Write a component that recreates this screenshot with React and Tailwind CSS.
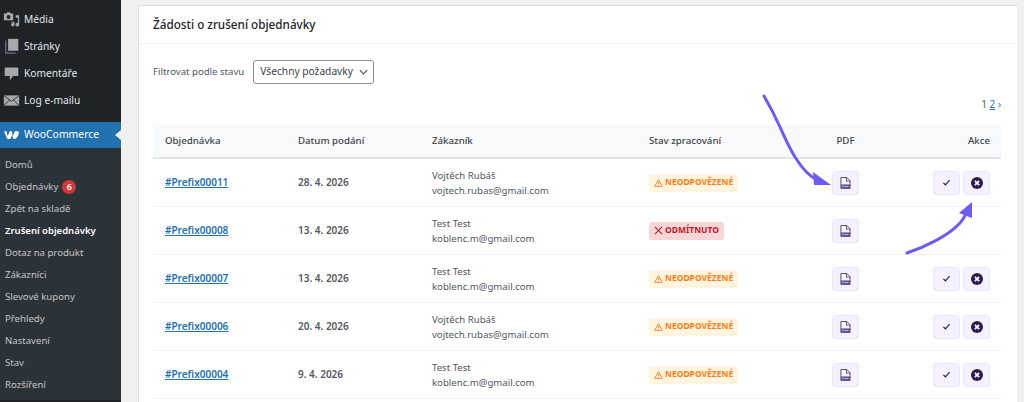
import React from "react";

const MediaIcon = () => (
  <svg viewBox="0 0 20 20" className="h-[17px] w-[17px] fill-[#a7aaad]">
    <path d="M1 3h3l1-1.500h3L9 3h3v8H1z M15 5h4v11a2.200 2.200 0 1 1-1.500-2V8H15z M9.500 12.500h4V16a2 2 0 1 1-1.500-1.800v-.7H9.500z" />
    <circle cx="6.500" cy="7" r="2.300" fill="#1d2327" />
  </svg>
);

const PagesIcon = () => (
  <svg viewBox="0 0 20 20" className="h-[17px] w-[17px] fill-[#a7aaad]">
    <path d="M6 1h12v14H6z" />
    <path d="M4 3v14h11v1.500H2.500V3z" fill="#6d6a9a" />
  </svg>
);

const CommentIcon = () => (
  <svg viewBox="0 0 20 20" className="h-[17px] w-[17px] fill-[#a7aaad]">
    <path d="M3 3h14a1 1 0 0 1 1 1v8a1 1 0 0 1-1 1h-5l-4 5v-5H3a1 1 0 0 1-1-1V4a1 1 0 0 1 1-1z" />
  </svg>
);

const MailIcon = () => (
  <svg viewBox="0 0 20 20" className="h-[17px] w-[17px]">
    <rect x="1" y="4" width="18" height="12" fill="#a7aaad" />
    <path d="M1.500 4.500 10 11l8.500-6.500M1.500 15.500 7.500 9.500M18.500 15.500l-6-6" fill="none" stroke="#1d2327" strokeWidth="1" />
  </svg>
);

const WooIcon = () => (
  <svg viewBox="0 0 20 12" className="h-[10px] w-[17px]">
    <path d="M1 1.500h3l1.300 6 2.700-6h2.500l1 6 2.500-6H18c1 0 1.300 3-.5 6-1.200 2-2.700 3.300-4 3.300-1.200 0-1.800-.8-2-2l-.5-2.500-2 3.500c-.6 1-1.300 1-2.500 1H5z" fill="#fff" />
  </svg>
);

const PdfIcon = () => (
  <svg viewBox="0 0 12 13" className="h-[12px] w-[11px]">
    <path d="M1 .500h6.500L11 4v8.500H1z" fill="#fff" stroke="#4a3a7c" strokeWidth="1" />
    <path d="M7 .500V4.500h4" fill="none" stroke="#4a3a7c" strokeWidth="1" />
    <path d="M1 8h10v4.500H1z" fill="#6a5a96" />
    <path d="M2.500 10.300h7" stroke="#d8b8cc" strokeWidth="1.200" strokeDasharray="1.500 .8" />
  </svg>
);

const CheckIcon = () => (
  <svg viewBox="0 0 12 10" className="h-[7px] w-[9px]">
    <path d="M1.500 5.500 4.500 8.300 10.500 1.500" fill="none" stroke="#33235f" strokeWidth="1.800" />
  </svg>
);

const CancelIcon = () => (
  <svg viewBox="0 0 14 14" className="h-[12px] w-[12px]">
    <circle cx="7" cy="7" r="7" fill="#2b1d52" />
    <path d="M4.500 4.500l5 5M9.500 4.500l-5 5" stroke="#fff" strokeWidth="2" />
  </svg>
);

const WarnIcon = () => (
  <svg viewBox="0 0 12 11" className="h-[8px] w-[9px] shrink-0">
    <path d="M6 1 11.200 10H.8z" fill="none" stroke="#f97f1c" strokeWidth="1.300" />
    <path d="M6 4v3.200M6 8v1" stroke="#f97f1c" strokeWidth="1.100" />
  </svg>
);

const CrossIcon = () => (
  <svg viewBox="0 0 10 10" className="h-[9px] w-[9px] shrink-0">
    <path d="M1 1l8 8M9 1 1 9" stroke="#b91c2c" strokeWidth="1.200" />
  </svg>
);

const topItems = [
  ["Média", MediaIcon],
  ["Stránky", PagesIcon],
  ["Komentáře", CommentIcon],
  ["Log e-mailu", MailIcon],
];

const subItems = [
  "Domů",
  "Objednávky",
  "Zpět na skladě",
  "Zrušení objednávky",
  "Dotaz na produkt",
  "Zákazníci",
  "Slevové kupony",
  "Přehledy",
  "Nastavení",
  "Stav",
  "Rozšíření",
];

const rows = [
  { id: "#Prefix00011", date: "28. 4. 2026", name: "Vojtěch Rubáš", mail: "vojtech.rubas@gmail.com", status: "open" },
  { id: "#Prefix00008", date: "13. 4. 2026", name: "Test Test", mail: "koblenc.m@gmail.com", status: "rejected" },
  { id: "#Prefix00007", date: "13. 4. 2026", name: "Test Test", mail: "koblenc.m@gmail.com", status: "open" },
  { id: "#Prefix00006", date: "20. 4. 2026", name: "Vojtěch Rubáš", mail: "vojtech.rubas@gmail.com", status: "open" },
  { id: "#Prefix00004", date: "9. 4. 2026", name: "Test Test", mail: "koblenc.m@gmail.com", status: "open" },
];

const IconButton = ({ children }) => (
  <button className="flex h-[24px] w-[27px] items-center justify-center rounded-[3px] border border-[#ebe6fb] bg-[#f5f2fe]">
    {children}
  </button>
);

const Sidebar = () => (
  <aside className="flex h-[402px] w-[121px] shrink-0 flex-col overflow-hidden bg-[#1d2327] pt-[6px] text-[9.600px]">
    <div className="mb-2 text-[10.200px]">
      {topItems.map(([label, Icon]) => (
        <div key={label} className="flex h-[27px] items-center gap-[4px] pl-[3px] text-[#e4e6e7]">
          <Icon />
          <span>{label}</span>
        </div>
      ))}
    </div>
    <div className="relative flex h-[26px] items-center gap-[4px] bg-[#2271b1] pl-[3px] text-[10.400px] text-[#fff]">
      <WooIcon />
      <span>WooCommerce</span>
      <div className="absolute right-0 top-[8px] h-0 w-0 border-y-[5px] border-r-[6px] border-y-transparent border-r-[#f0f0f1]" />
    </div>
    <div className="h-[252px] bg-[#2c3338] pt-[6px]">
      {subItems.map((label) => (
        <div
          key={label}
          className={
            label === "Zrušení objednávky"
              ? "flex h-[22px] items-center pl-[5px] text-[9.500px] font-semibold text-white"
              : "flex h-[22px] items-center pl-[5px] text-[#c3c4c7]"
          }
        >
          {label}
          {label === "Objednávky" && (
            <span className="ml-[4px] flex h-[14px] w-[14px] items-center justify-center rounded-full bg-[#d63638] text-[9px] font-semibold text-white">
              6
            </span>
          )}
        </div>
      ))}
    </div>
  </aside>
);

const Row = ({ row }) => (
  <div className="flex h-[48px] items-center border-b border-[#f0f0f1] pl-[12px] text-[9.600px] text-[#50575e]">
    <a className="w-[133px] text-[10px] font-semibold text-[#2271b1] underline">{row.id}</a>
    <div className="w-[134px] text-[10px] font-semibold text-[#50575e]">{row.date}</div>
    <div className="w-[217px] leading-[15px]">
      <div>{row.name}</div>
      <div>{row.mail}</div>
    </div>
    <div className="w-[183px]">
      {row.status === "open" ? (
        <span className="inline-flex h-[18px] items-center gap-[2px] rounded-[3px] bg-[#fff4de] px-[5px] text-[8.500px] font-bold text-[#f97f1c]">
          <WarnIcon />
          NEODPOVĚZENÉ
        </span>
      ) : (
        <span className="inline-flex h-[18px] items-center gap-[2px] rounded-[3px] bg-[#f8d5d7] px-[5px] text-[8.500px] font-bold text-[#b91c2c]">
          <CrossIcon />
          ODMÍTNUTO
        </span>
      )}
    </div>
    <IconButton>
      <PdfIcon />
    </IconButton>
    {row.status === "open" && (
      <div className="ml-auto mr-[11px] flex gap-[3px]">
        <IconButton>
          <CheckIcon />
        </IconButton>
        <IconButton>
          <CancelIcon />
        </IconButton>
      </div>
    )}
  </div>
);

export default function App() {
  return (
    <div className="relative flex h-[402px] w-[1024px] overflow-hidden bg-[#f0f0f1] font-['Noto_Sans',sans-serif]">
      <Sidebar />
      <main className="ml-[17px] mr-[7px] mt-[5px] flex-1 border-l border-t border-[#dcdcde] bg-white">
        <h2 className="flex h-[38px] items-center border-b border-[#f0f0f1] pl-[14px] text-[11.700px] font-medium text-[#1d2327]">
          Žádosti o zrušení objednávky
        </h2>
        <div className="ml-[14px] mr-[16px]">
          <div className="mt-[16px] flex items-center gap-[9px] text-[9.600px] text-[#50575e]">
            <span>Filtrovat podle stavu</span>
            <div className="flex h-[24px] w-[121px] items-center justify-between rounded-[3px] border border-[#8c8f94] pl-[6px] pr-[5px] text-[10.200px] whitespace-nowrap text-[#3c434a]">
              Všechny požadavky
              <svg viewBox="0 0 10 6" className="h-[6px] w-[9px]">
                <path d="M1 1l4 4 4-4" fill="none" stroke="#50575e" strokeWidth="1.300" />
              </svg>
            </div>
          </div>
          <div className="mt-[13px] h-[14px] text-right text-[10px] leading-[14px] text-[#50575e]">
            1 <span className="text-[#2271b1] underline">2</span> <span className="text-[#2271b1]">›</span>
          </div>
          <div>
            <div className="mt-[14px] flex h-[34px] items-center border-b-2 border-[#e4e5e7] bg-[#f8f9fa] pl-[12px] text-[9.700px] font-medium text-[#3c434a]">
              <div className="w-[133px]">Objednávka</div>
              <div className="w-[134px]">Datum podání</div>
              <div className="w-[217px]">Zákazník</div>
              <div className="w-[183px]">Stav zpracování</div>
              <div className="w-[27px] text-center">PDF</div>
              <div className="ml-auto mr-[11px]">Akce</div>
            </div>
            {rows.map((row) => (
              <Row key={row.id} row={row} />
            ))}
          </div>
        </div>
      </main>
      <svg className="pointer-events-none absolute left-0 top-0 h-[402px] w-[1024px]" viewBox="0 0 1024 402">
        <path d="M764 96C771 108 776 118 780 127C786 140 790 150 797 160C802 168 808 175 817 180" fill="none" stroke="#6c5cf0" strokeWidth="3" strokeLinecap="round" />
        <path d="M813 172L831 185L814 185Z" fill="#6c5cf0" />
        <path d="M907 253C925 247 948 236 960 223C963 220 964 217 966 214" fill="none" stroke="#6c5cf0" strokeWidth="3" strokeLinecap="round" />
        <path d="M972 202L972 218L959 213Z" fill="#6c5cf0" />
      </svg>
    </div>
  );
}
